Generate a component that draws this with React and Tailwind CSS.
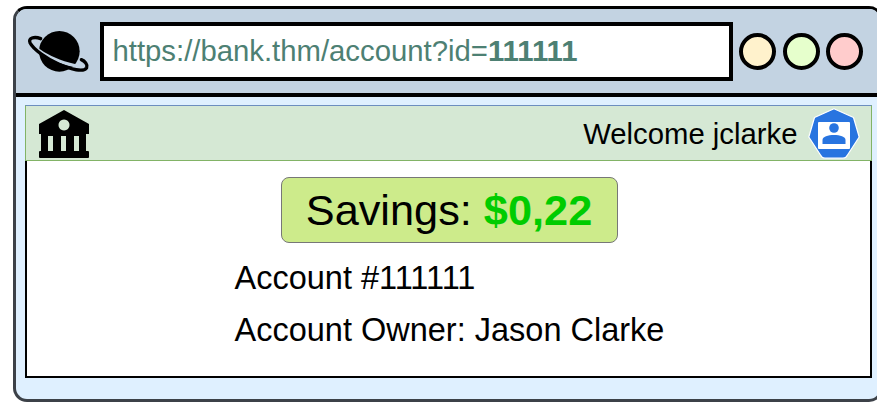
import React from "react";

function PlanetIcon() {
  return (
    <svg width="70" height="50" viewBox="0 0 210 150" className="shrink-0">
      <circle cx="106" cy="76" r="61" fill="#000" />
      <g transform="translate(0 5)">
        <path d="M25 52 C40 68 72 88 105 100 C125 108 150 114 175 118" fill="none" stroke="#c3d3e2" strokeWidth="10" />
        <path d="M50 33 C30 25 12 32 18 45 C28 65 70 95 105 110 C140 125 180 135 188 120 C192 110 182 100 172 96" fill="none" stroke="#000" strokeWidth="10" strokeLinecap="round" />
      </g>
    </svg>
  );
}

function BankIcon() {
  return (
    <svg width="52" height="48" viewBox="0 0 52 48" className="shrink-0 mt-[2px]">
      <path fillRule="evenodd" d="M26 0 L51 14 V24 H1 V14 Z M26 9.5 a5.5 5.5 0 1 0 0.01 0 Z" fill="#000" />
      <path d="M3 24 H48 V41 H41 V26 H36 V41 H28 V26 H23 V41 H15 V26 H10 V41 H3 Z" fill="#000" />
      <rect x="1" y="41" width="50" height="7" rx="1" fill="#000" />
    </svg>
  );
}

function UserIcon() {
  return (
    <svg width="52" height="51" viewBox="0 0 52 51" className="shrink-0">
      <path d="M26 0.8 L45.5 9.5 L51.2 29 L39.5 47 Q38 50.2 35 50.2 H17 Q14 50.2 12.5 47 L0.8 29 L6.5 9.5 Z" fill="#2874e0" stroke="#fff" strokeWidth="1.2" strokeLinejoin="round" />
      <rect x="10" y="14" width="32" height="27" rx="1" fill="#fff" />
      <circle cx="26" cy="20" r="4.8" fill="#2874e0" />
      <path d="M14.5 36 V32 C14.5 28.5 20 27 26 27 C32 27 37.5 28.5 37.5 32 V36 Z" fill="#2874e0" />
    </svg>
  );
}

function Dot({ color }) {
  return <div className={`w-[37px] h-[37px] rounded-full border-4 border-black ${color}`} />;
}

export default function App() {
  return (
    <div className="w-[877px] h-[408px] bg-white overflow-hidden pt-[6px] pl-[13px] font-['Liberation_Sans',Arial,sans-serif]">
      <div className="w-[870px] h-[396px] rounded-[14px] border-[3.5px] border-black border-b-[#3c4148] border-l-[#3c4148] bg-[#dff0ff] overflow-hidden">
        <div className="h-[88px] bg-[#c3d3e2] border-b-4 border-black flex items-center pl-[7.5px]">
          <PlanetIcon />
          <div className="ml-[6px] w-[633px] h-[59px] border-4 border-black bg-white flex items-center pl-[9px]">
            <span className="text-[29.3px] leading-none text-[#4d8073]">
              https://bank.thm/account?id=<b>111111</b>
            </span>
          </div>
          <div className="ml-[6.5px] flex gap-[6.5px]">
            <Dot color="bg-[#fff2cc]" />
            <Dot color="bg-[#e6ffcc]" />
            <Dot color="bg-[#ffcccc]" />
          </div>
        </div>
        <div className="ml-[8.5px] mt-[8px] w-[847px]">
          <div className="h-[56px] bg-[#d5e8d4] border border-[#82b366] border-t-[#6c8ebf] flex items-center justify-between pl-[12px] pr-[11px]">
            <BankIcon />
            <div className="flex items-center gap-[10px]">
              <span className="pt-[2px] text-[29.3px] leading-none text-black">Welcome jclarke</span>
              <UserIcon />
            </div>
          </div>
          <div className="h-[217px] bg-white border-2 border-t-0 border-black flex flex-col">
            <div className="mt-[16px] ml-[254px] w-[337px] h-[66px] pt-[1px] rounded-lg bg-[#cdeb8b] border border-[#777] flex items-center justify-center text-[43.3px] leading-none text-black">
              <span>
                Savings: <b className="text-[#00cc00]">$0,22</b>
              </span>
            </div>
            <div className="ml-[208px] mt-[17px] text-[32.5px] leading-[36px] text-black">Account #111111</div>
            <div className="ml-[208px] mt-[16px] text-[32.5px] leading-[36px] text-black">Account Owner: Jason Clarke</div>
          </div>
        </div>
      </div>
    </div>
  );
}
